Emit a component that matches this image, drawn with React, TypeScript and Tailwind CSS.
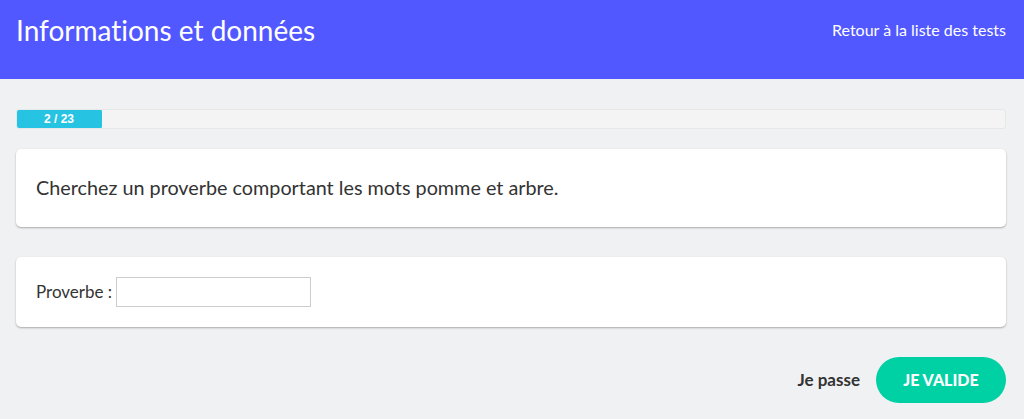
export default function App() {
  return (
    <div className="min-h-[419px] bg-[#f0f1f3] font-['Lato',sans-serif] text-[#333] [font-variant-ligatures:none]">
      {/* Header */}
      <header className="flex h-[79px] items-start justify-between bg-[#5258ff] pl-4 pr-[18px] pt-[12px]">
        <h1 className="text-[28px] leading-[36px] text-white">Informations et données</h1>
        <a href="#" className="mt-[9px] text-[16px] leading-[18px] text-white">
          Retour à la liste des tests
        </a>
      </header>

      <main className="pl-4 pr-[18px] pt-[30px]">
        {/* Progress */}
        <div className="h-[20px] w-full overflow-hidden rounded-[3px] border border-[#e6e7e9] bg-[#f4f4f5]">
          <div className="-m-px flex h-[20px] w-[86px] items-center justify-center rounded-[3px] bg-[#27c3e3] font-['Liberation_Sans',sans-serif] text-[12px] font-semibold text-white">
            2 / 23
          </div>
        </div>

        {/* Question */}
        <div className="mt-[20px] flex h-[78px] items-center rounded-[5px] bg-white px-5 shadow-[0_1px_2px_rgba(0,0,0,0.3)]">
          <p className="text-[19.8px]">Cherchez un proverbe comportant les mots pomme et arbre.</p>
        </div>

        {/* Answer */}
        <div className="mt-[30px] flex h-[70px] items-center rounded-[5px] bg-white px-5 shadow-[0_1px_2px_rgba(0,0,0,0.3)]">
          <label className="mr-[4px] text-[17px]">Proverbe :</label>
          <input type="text" className="h-[30px] w-[195px] border border-[#ccc] bg-white px-1 outline-none" />
        </div>

        {/* Actions */}
        <div className="mt-[30px] flex items-center justify-end gap-4">
          <button className="text-[17px] font-bold text-[#333]">Je passe</button>
          <button className="h-[46px] w-[130px] rounded-full bg-[#00d1a5] text-[16px] font-black text-white">
            JE VALIDE
          </button>
        </div>
      </main>
    </div>
  );
}
